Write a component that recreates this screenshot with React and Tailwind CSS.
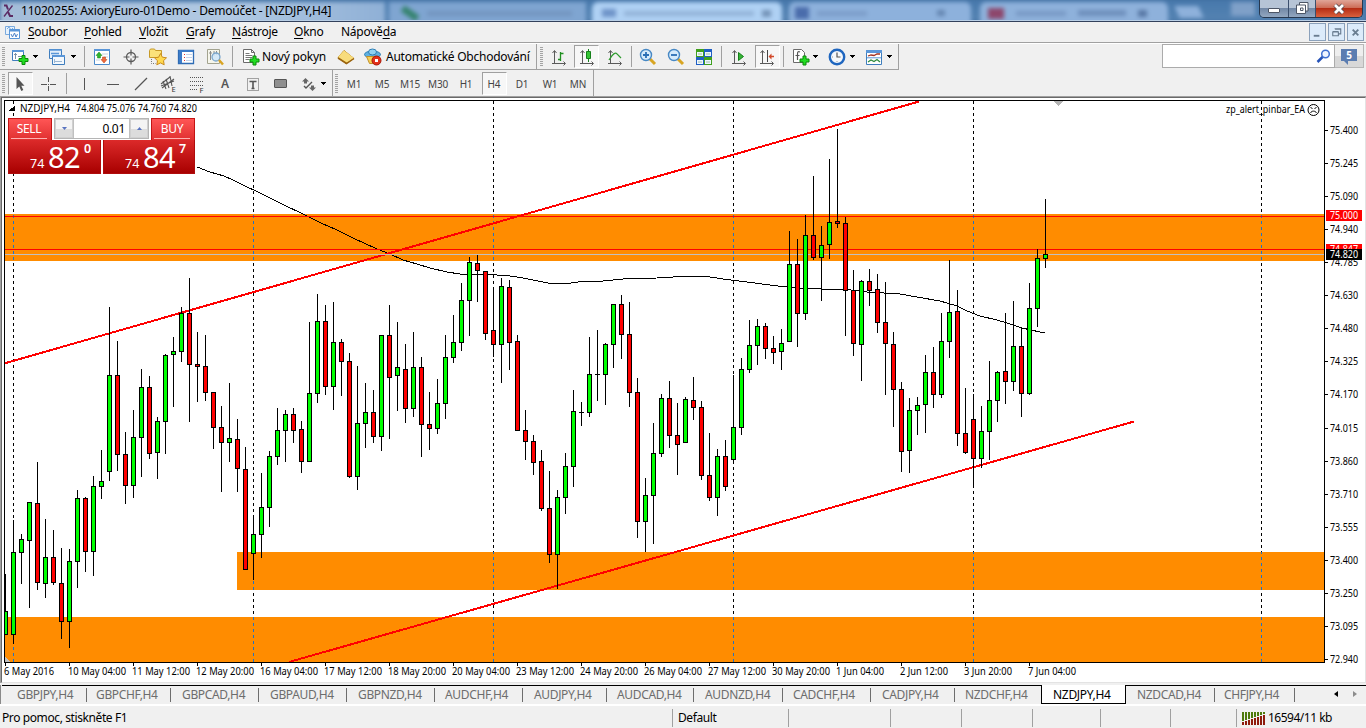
import React from "react";

// [high, bodyTop, bodyBottom, low, up] - one row per H4 bar, 8px apart
const candles = [
  [574, 611, 635, 635, 1], [520, 552, 635, 644, 1], [534, 539, 553, 584, 1], [502, 502, 541, 608, 1],
  [462, 503, 583, 590, 0], [519, 557, 584, 598, 1], [530, 557, 583, 585, 0], [548, 583, 622, 639, 0],
  [549, 561, 622, 648, 1], [490, 498, 562, 588, 1], [497, 498, 552, 572, 0], [476, 486, 552, 576, 1],
  [450, 481, 487, 499, 1], [307, 375, 472, 481, 1], [341, 375, 455, 471, 0], [432, 454, 486, 504, 0],
  [410, 437, 486, 498, 1], [369, 387, 438, 477, 1], [376, 387, 454, 459, 0], [417, 421, 453, 479, 1],
  [354, 355, 422, 454, 1], [337, 351, 355, 407, 1], [307, 313, 352, 362, 1], [278, 313, 365, 422, 0],
  [332, 364, 367, 402, 0], [335, 366, 393, 401, 0], [392, 392, 428, 449, 0], [406, 427, 443, 492, 0],
  [383, 438, 443, 462, 1], [419, 439, 469, 492, 0], [447, 469, 570, 570, 0], [518, 534, 554, 580, 1],
  [473, 507, 535, 558, 1], [451, 456, 508, 527, 1], [408, 430, 457, 465, 1], [410, 414, 431, 462, 1],
  [408, 414, 431, 443, 0], [421, 429, 462, 473, 0], [322, 393, 462, 462, 1], [294, 321, 394, 403, 1],
  [305, 321, 387, 395, 0], [302, 342, 387, 410, 1], [339, 342, 362, 396, 0], [353, 361, 477, 478, 0],
  [366, 423, 477, 490, 1], [383, 412, 424, 448, 1], [390, 412, 437, 443, 0], [335, 335, 437, 451, 1],
  [305, 335, 378, 439, 0], [322, 367, 376, 411, 1], [344, 369, 409, 423, 0], [332, 367, 409, 417, 1],
  [357, 367, 425, 457, 0], [392, 424, 429, 450, 0], [379, 403, 429, 434, 1], [335, 357, 404, 419, 1],
  [315, 342, 358, 363, 1], [283, 300, 343, 351, 1], [257, 262, 301, 336, 1], [255, 263, 271, 302, 0],
  [271, 271, 334, 340, 0], [290, 330, 345, 357, 0], [278, 286, 345, 383, 1], [280, 287, 343, 370, 0],
  [335, 341, 431, 431, 0], [410, 430, 442, 460, 0], [435, 441, 463, 475, 0], [450, 461, 509, 511, 0],
  [471, 508, 555, 563, 0], [490, 497, 555, 589, 1], [453, 466, 498, 514, 1], [390, 411, 467, 487, 1],
  [402, 412, 413, 426, 1], [337, 374, 413, 417, 1], [330, 374, 375, 401, 1], [343, 344, 375, 405, 1],
  [304, 304, 345, 368, 1], [295, 304, 335, 359, 0], [302, 334, 393, 407, 0], [378, 392, 522, 538, 0],
  [478, 495, 522, 552, 1], [423, 453, 496, 544, 1], [394, 398, 454, 457, 1], [381, 398, 436, 448, 0],
  [403, 435, 445, 475, 0], [397, 399, 443, 443, 1], [377, 400, 408, 420, 0], [401, 407, 476, 480, 0],
  [433, 475, 498, 501, 0], [449, 456, 498, 516, 1], [440, 456, 487, 491, 0], [375, 427, 460, 464, 1],
  [358, 369, 428, 435, 1], [320, 345, 370, 373, 1], [319, 326, 346, 365, 1], [323, 326, 349, 359, 0],
  [336, 348, 353, 364, 0], [329, 343, 352, 370, 1], [231, 264, 342, 342, 1], [239, 264, 314, 347, 0],
  [215, 235, 314, 320, 1], [176, 235, 258, 260, 0], [226, 245, 258, 301, 1], [159, 222, 245, 259, 1],
  [129, 221, 224, 228, 0], [217, 223, 291, 336, 0], [270, 290, 344, 356, 0], [280, 281, 345, 381, 1],
  [269, 281, 291, 306, 0], [274, 289, 323, 333, 0], [282, 322, 344, 395, 0], [332, 344, 390, 427, 0],
  [382, 389, 452, 472, 0], [398, 410, 451, 473, 1], [397, 405, 411, 435, 1], [355, 372, 405, 433, 1],
  [347, 372, 395, 408, 0], [313, 341, 395, 398, 1], [260, 312, 342, 358, 1], [290, 311, 434, 446, 0],
  [388, 433, 453, 454, 0], [394, 419, 459, 486, 0], [406, 431, 459, 468, 1], [361, 400, 432, 460, 1],
  [371, 372, 401, 422, 1], [313, 371, 382, 404, 0], [301, 346, 382, 391, 1], [327, 346, 394, 417, 0],
  [283, 308, 394, 395, 1], [249, 258, 309, 327, 1], [199, 254, 259, 268, 1],
];

const movingAverage =
  "197,167 210,172 224,176 233,180 243,185 260,193 282,204 305,215 321,223 337,230 353,238 377,249 390,254 403,260 417,264 430,268 447,272 460,274 483,274 497,275 510,276 523,278 548,283 565,284 578,282 603,281 623,279 657,278 690,276 710,277 723,279 747,282 770,285 795,288 822,289 843,289 867,292 900,294 917,297 940,301 957,306 967,311 980,316 997,320 1007,323 1022,328 1040,332 1045,333";

const prices = [
  ["75.400", 130], ["75.245", 163], ["75.090", 196], ["74.940", 229], ["74.785", 262], ["74.630", 295],
  ["74.480", 328], ["74.325", 361], ["74.170", 394], ["74.015", 428], ["73.860", 461], ["73.710", 494],
  ["73.555", 527], ["73.400", 560], ["73.250", 593], ["73.095", 626], ["72.940", 659],
];

const dates = [
  "6 May 2016", "10 May 04:00", "11 May 12:00", "12 May 20:00", "16 May 04:00", "17 May 12:00",
  "18 May 20:00", "20 May 04:00", "23 May 12:00", "24 May 20:00", "26 May 04:00", "27 May 12:00",
  "30 May 20:00", "1 Jun 04:00", "2 Jun 12:00", "3 Jun 20:00", "7 Jun 04:00",
];

const separators = [13, 253, 493, 733, 973, 1261];

const menu = [
  ["", "S", "oubor", "w-[56px]"],
  ["", "P", "ohled", "w-[55px]"],
  ["", "V", "ložit", "w-[47px]"],
  ["", "G", "rafy", "w-[46px]"],
  ["", "N", "ástroje", "w-[62px]"],
  ["", "O", "kno", "w-[47px]"],
  ["Nápově", "d", "a", "w-[60px]"],
];

const tabs = [
  ["GBPJPY,H4", "w-[85px] pl-[15px]"],
  ["GBPCHF,H4", "w-[84px] pl-[9px]"],
  ["GBPCAD,H4", "w-[88px] pl-[11px]"],
  ["GBPAUD,H4", "w-[88px] pl-[11px]"],
  ["GBPNZD,H4", "w-[88px] pl-[11px]"],
  ["AUDCHF,H4", "w-[88px] pl-[10px]"],
  ["AUDJPY,H4", "w-[84px] pl-[11px]"],
  ["AUDCAD,H4", "w-[87px] pl-[10px]"],
  ["AUDNZD,H4", "w-[89px] pl-[11px]"],
  ["CADCHF,H4", "w-[88px] pl-[10px]"],
  ["CADJPY,H4", "w-[84px] pl-[11px]"],
  ["NZDCHF,H4", "w-[86px] pl-[10px]"],
  ["NZDJPY,H4", "w-[85px] pl-[11px]"],
  ["NZDCAD,H4", "w-[89px] pl-[11px]"],
  ["CHFJPY,H4", "w-[80px] pl-[9px]"],
];

const timeframes = ["M1", "M5", "M15", "M30", "H1", "H4", "D1", "W1", "MN"];

function Slot({ w, children }) {
  return <div className={`flex h-full shrink-0 items-center justify-center ${w}`}>{children}</div>;
}

function Grip({ w }) {
  return (
    <Slot w={w}>
      <div className="h-[20px] w-[3px] bg-[repeating-linear-gradient(#a3a3a3_0_1px,#efefef_1px_2px)]" />
    </Slot>
  );
}

function Sep({ w }) {
  return (
    <Slot w={w}>
      <div className="h-[21px] w-px bg-[#a0a0a0]" />
    </Slot>
  );
}

function Drop({ w }) {
  return (
    <Slot w={w}>
      <svg width="5" height="3" className="shrink-0" shapeRendering="crispEdges">
        <path d="M0 0h5v1h-1v1h-1v1h-1v-1h-1v-1h-1z" fill="#000" />
      </svg>
    </Slot>
  );
}

function Icon({ children, size = 18 }) {
  return (
    <svg width={size} height={size} viewBox={`0 0 ${size} ${size}`} className="shrink-0">
      {children}
    </svg>
  );
}

function Pressed({ children }) {
  return (
    <div className="flex h-[23px] w-[25px] shrink-0 items-center justify-center border border-t-[#a0a0a0] border-r-white border-b-white border-l-[#a0a0a0] bg-[#f7f7f7]">
      {children}
    </div>
  );
}

function Plus({ x, y }) {
  return (
    <path
      transform={`translate(${x} ${y})`}
      d="M3.5 .5h3v3h3v3h-3v3h-3v-3h-3v-3h3z"
      fill="#22dd22"
      stroke="#0a8a0a"
    />
  );
}

// axes shared by the chart type buttons
function Axes() {
  return (
    <path d="M4.5 3v13M2 15.5h13M2.5 5l2-2.5 2 2.5M13.5 13.5l2 2-2 2" fill="none" stroke="#5a5a5a" />
  );
}

function TitleBar() {
  return (
    <div className="relative flex h-[22px] overflow-hidden border-b border-[#33415c] bg-[#416d9f]">
      <div className="absolute inset-0 flex bg-[linear-gradient(#4779ac,#5583b2)] pt-[2px] blur-[2px]">
        <div className="h-[22px] w-[385px] bg-[linear-gradient(90deg,#a3bcd8,#b1c9e3_60%,#8fb0d6)]" />
        <div className="ml-[4px] flex h-[22px] w-[197px] items-center gap-2 bg-[#7fa5d1] pl-[12px]">
          <span className="h-[7px] w-[18px] rotate-[35deg] bg-[#35836f]" />
          <span className="h-[5px] w-[145px] bg-[#7395c0]" />
        </div>
        <div className="ml-[6px] flex h-[22px] w-[190px] items-center gap-2 rounded-t-md bg-[#afd1f4] pl-[10px]">
          <span className="h-[8px] w-[14px] bg-[#6e93c8]" />
          <span className="h-[5px] w-[130px] bg-[#93b3d8]" />
          <span className="h-[7px] w-[9px] bg-[#7493b8]" />
        </div>
        <div className="ml-[7px] flex h-[22px] w-[182px] items-center gap-2 rounded-t-md bg-[#8db1dc] pl-[6px]">
          <span className="h-[12px] w-[14px] bg-[#4a6cab]" />
          <span className="h-[5px] w-[50px] bg-[#7c9dc9]" />
          <span className="ml-[62px] h-[6px] w-[8px] bg-[#6586b1]" />
        </div>
        <div className="ml-[9px] flex h-[22px] w-[188px] items-center gap-3 rounded-t-md bg-[#8eb1db] pl-[8px]">
          <span className="h-[11px] w-[16px] bg-[#8d476c]" />
          <span className="h-[5px] w-[50px] bg-[#7899c5]" />
          <span className="h-[6px] w-[48px] bg-[#6e8fbc]" />
          <span className="h-[7px] w-[9px] bg-[#5878a5]" />
        </div>
        <div className="mt-[4px] ml-[9px] h-[12px] w-[24px] skew-x-[25deg] bg-[#8eb1db]" />
        <div className="ml-[30px] h-[14px] w-[24px] bg-[#7fa0c8]" />
      </div>
      <div className="absolute inset-x-0 bottom-0 h-px bg-[#b9cfe6]" />
      <div className="relative flex flex-1 items-center">
        <svg width="14" height="14" viewBox="0 0 14 14" className="ml-[2px]">
          <path d="M2 1.500h2.500l1.500 4M6 8l2 4h3" fill="none" stroke="#5b2a63" strokeWidth="2" />
          <path d="M10.500 1.500L2 12.500" stroke="#5b2a63" strokeWidth="1.300" />
        </svg>
        <span className="ml-[5px] text-[12px] tracking-[-0.21px] whitespace-nowrap text-black">
          11020255: AxioryEuro-01Demo - Demoúčet - [NZDJPY,H4]
        </span>
      </div>
      <div className="relative mr-[3px] flex h-[18px] w-[104px] overflow-hidden rounded-b-[5px] border border-t-0 border-[#26374f]">
        <div className="flex w-[29px] items-end justify-center border-r border-[#3b4f6d] bg-[linear-gradient(#b6c4d6_45%,#7288a6_50%,#93a7c0)] pb-[4px]">
          <span className="h-[5px] w-[12px] rounded-[1px] border border-[#4d5666] bg-white" />
        </div>
        <div className="flex w-[27px] items-center justify-center border-r border-[#3b4f6d] bg-[linear-gradient(#b6c4d6_45%,#7288a6_50%,#93a7c0)]">
          <svg width="13" height="13" viewBox="0 0 13 13">
            <path d="M3.500 .500h8.500v8.500h-2.500v2.500H.500V3h3z" fill="#fff" stroke="#4d5666" />
            <path d="M3.500 3h6v6.500M4.500 6h2.500v2.500h-2.500z" fill="none" stroke="#4d5666" />
          </svg>
        </div>
        <div className="flex flex-1 items-center justify-center bg-[linear-gradient(#e0a598_0%,#cd6d58_45%,#b52d15_50%,#d9613d)]">
          <svg width="14" height="12" viewBox="0 0 14 12">
            <path d="M3 2l8 8M11 2l-8 8" stroke="#5a4a50" strokeWidth="4.500" />
            <path d="M3 2l8 8M11 2l-8 8" stroke="#fff" strokeWidth="2.800" />
          </svg>
        </div>
      </div>
    </div>
  );
}

function MenuBar() {
  return (
    <div className="flex h-[21px] items-center border-b border-[#a0a0a0] bg-[#f0f0f0]">
      <svg width="15" height="15" viewBox="0 0 15 15" className="mr-[8px] ml-[5px]">
        <path d="M.500 1.500h9v8h-9z" fill="#e8f2fc" stroke="#7aaade" />
        <path d="M2 4l2-2 2 3 2-2" fill="none" stroke="#7aaade" />
        <path d="M4.500 4.500h10v9h-10z" fill="#fff" stroke="#5a96d8" />
        <path d="M4 5.500h11" stroke="#5a96d8" strokeWidth="2" />
        <path d="M6 9l1.500 3 2-4 1.500 4 1.500-3" fill="none" stroke="#4c82c8" />
      </svg>
      {menu.map(([pre, key, post, w]) => (
        <div key={post} className={`shrink-0 text-[12px] tracking-[-0.25px] text-black ${w}`}>
          {pre}
          <span className="underline underline-offset-2">{key}</span>
          {post}
        </div>
      ))}
      <div className="mr-[2px] ml-auto flex gap-[2px]">
        {["M4 11.500h6", "M6.500 4.500h6v5h-2M4 7.500h6v4H4zM4 7h6M6 4h7", "M5 5l6 6M11 5l-6 6"].map((d, i) => (
          <div key={d} className="flex h-[18px] w-[17px] items-center justify-center border border-[#8ba1bb] bg-[#dcebfa]">
            <svg width="15" height="15" viewBox="0 0 16 16">
              <path d={d} fill="none" stroke="#6a7d90" strokeWidth={i === 1 ? 1.2 : 2} />
            </svg>
          </div>
        ))}
      </div>
    </div>
  );
}

function Toolbar() {
  return (
    <div className="flex h-[27px] border-t border-white bg-[#f0f0f0]">
      <div className="flex h-[26px] w-[899px] border-r border-b border-[#a0a0a0]">
        <Grip w="w-[7px]" />
        <Slot w="w-[25px]">
          <Icon>
            <path d="M1.500 2.500h11v10h-11z" fill="#fff" stroke="#3f7dbd" />
            <path d="M1 3h12" stroke="#5a96d8" strokeWidth="2" />
            <path d="M4.500 5v6M3 6.500h3M7 8.500h4" stroke="#7b90a8" />
            <Plus x={7.500} y={7} />
          </Icon>
        </Slot>
        <Drop w="w-[7px]" />
        <Slot w="ml-[4px] w-[27px]">
          <Icon>
            <path d="M1.500 1.500h12v9h-12z" fill="#e4effa" stroke="#3f7dbd" />
            <path d="M1 2h13M3 5.500h8" stroke="#5a96d8" strokeWidth="1.500" />
            <path d="M4.500 7.500h12v9h-12z" fill="#f3f8fd" stroke="#3f7dbd" />
            <path d="M4 8h13" stroke="#5a96d8" strokeWidth="2" />
            <path d="M7 13.500h7M6.500 11v4" stroke="#9db8d4" />
          </Icon>
        </Slot>
        <Drop w="w-[6px]" />
        <Sep w="w-[16px]" />
        <Slot w="w-[20px]">
          <Icon>
            <path d="M1.500 1.500h15v15h-15z" fill="#fff" stroke="#4c8acb" />
            <path d="M1 2h16" stroke="#5a96d8" strokeWidth="2" />
            <path d="M9 6h6M11 9h4M3 12h4" stroke="#c4d3e2" />
            <path d="M6 4l3 3.500H7.500V10h-3V7.500H3z" fill="#2db52d" stroke="#16801a" strokeWidth=".5" />
            <path d="M11 15L8 11.500h1.500V9h3v2.500H14z" fill="#ee6a3c" stroke="#b63a14" strokeWidth=".5" />
          </Icon>
        </Slot>
        <Slot w="w-[37px]">
          <Icon>
            <circle cx="9" cy="9" r="4.500" fill="none" stroke="#5b5b5b" strokeWidth="1.300" />
            <path d="M9 1.500v6M9 10.500v6M1.500 9h6M10.500 9h6" stroke="#5b5b5b" strokeWidth="1.200" />
          </Icon>
        </Slot>
        <Slot w="w-[18px]">
          <Icon>
            <path d="M.500 2.500l1-1.500h4l1 1.500h6v7H.500z" fill="#fbe27a" stroke="#c79a28" />
            <path d="M2.500 11v4.500h4" fill="none" stroke="#777" strokeDasharray="1 1" />
            <path d="M11.500 5.500l1.900 3.700 4.100.6-3 2.900.7 4.100-3.700-1.900-3.700 1.900.7-4.100-3-2.900 4.100-.6z" fill="#ffd94f" stroke="#c98c1e" />
          </Icon>
        </Slot>
        <Slot w="w-[38px]">
          <Icon>
            <path d="M1.500 2.500h15v13h-15z" fill="#fff" stroke="#2f6cb5" strokeWidth="1.300" />
            <path d="M2 3h14" stroke="#3c7cc8" strokeWidth="2" />
            <path d="M3.500 4v11" stroke="#3c7cc8" strokeWidth="3" />
            <path d="M7 6.500h1M7 9.500h1M7 12.500h1" stroke="#d33" />
            <path d="M9 6.500h6M9 9.500h6M9 12.500h6" stroke="#c3d4ea" />
          </Icon>
        </Slot>
        <Slot w="w-[19px]">
          <Icon>
            <path d="M1.500 1.500h12v14h-12z" fill="#f6f6ec" stroke="#a3a38f" />
            <path d="M4.500 3v9M3 5h3M8 3v5M10.500 3v4" stroke="#8c8c8c" />
            <circle cx="10" cy="9" r="4" fill="#cfe6fa" fillOpacity=".85" stroke="#7aa5cc" strokeWidth="1.300" />
            <path d="M13 12l4 4.500" stroke="#d9a423" strokeWidth="2.500" />
          </Icon>
        </Slot>
        <Sep w="w-[16px]" />
        <Slot w="w-[21px]">
          <Icon>
            <path d="M1.500 1.500h8l3 3v10h-11z" fill="#fff" stroke="#6b6b6b" />
            <path d="M9.500 1.500v3h3" fill="none" stroke="#6b6b6b" />
            <path d="M3.500 5.500h4M3.500 7.500h7M3.500 9.500h7M3.500 11.500h4" stroke="#777" />
            <Plus x={7.500} y={7.500} />
          </Icon>
        </Slot>
        <div className="w-[67px] self-center pl-px text-[12px] tracking-[-0.2px] whitespace-nowrap text-black">Nový pokyn</div>
        <Slot w="w-[36px]">
          <Icon>
            <path d="M7 2.500L1 9.500l8 6 8-5z" fill="#f3c64a" stroke="#b07a17" />
            <path d="M7 2.500l10 7.500-7 4.500L1 9z" fill="#f8dc7c" />
            <path d="M1 10l8.500 5.500 7.500-5" fill="none" stroke="#9a6410" strokeWidth="1.500" />
          </Icon>
        </Slot>
        <Slot w="w-[18px]">
          <Icon>
            <ellipse cx="8.500" cy="6.500" rx="8" ry="3.500" fill="#5fb0e0" stroke="#2f7fb5" />
            <ellipse cx="8.500" cy="4" rx="4" ry="3" fill="#8fd0f2" stroke="#2f7fb5" />
            <path d="M2.500 8.500h11l-2 7h-6z" fill="#f6cf55" stroke="#c0902a" />
            <circle cx="12.500" cy="12.500" r="4.500" fill="#e2301a" stroke="#a81505" />
            <path d="M11 11h3v3h-3z" fill="#fff" />
          </Icon>
        </Slot>
        <div className="w-[154px] self-center pl-[4px] text-[12px] tracking-[-0.24px] whitespace-nowrap text-black">Automatické Obchodování</div>
        <div className="w-px bg-[#a0a0a0]" />
        <Grip w="w-[9px]" />
        <Slot w="w-[26px]">
          <Icon>
            <Axes />
            <path d="M10.500 4v9M10.500 5.500h3M8 11.500h3" stroke="#1f8f1f" strokeWidth="1.300" />
          </Icon>
        </Slot>
        <Slot w="w-[29px]">
          <Pressed>
            <Icon>
              <Axes />
              <path d="M10.500 1v13" stroke="#15801a" />
              <path d="M8.500 3.500h4v7h-4z" fill="#35c435" stroke="#15801a" />
            </Icon>
          </Pressed>
        </Slot>
        <Slot w="w-[28px]">
          <Icon>
            <Axes />
            <path d="M3 12c4-7 7-8 8-6l4 4" fill="none" stroke="#2d9a2d" strokeWidth="1.200" />
          </Icon>
        </Slot>
        <Sep w="w-[4px]" />
        <Slot w="w-[30px]">
          <Icon>
            <path d="M11 11l5 5" stroke="#d8a522" strokeWidth="3" />
            <circle cx="7" cy="7" r="5.500" fill="#d6ebfb" stroke="#4788c4" strokeWidth="1.400" />
            <path d="M4 7h6M7 4v6" stroke="#2b6fb5" strokeWidth="1.800" />
          </Icon>
        </Slot>
        <Slot w="w-[26px]">
          <Icon>
            <path d="M11 11l5 5" stroke="#d8a522" strokeWidth="3" />
            <circle cx="7" cy="7" r="5.500" fill="#d6ebfb" stroke="#4788c4" strokeWidth="1.400" />
            <path d="M4 7h6" stroke="#2b6fb5" strokeWidth="1.800" />
          </Icon>
        </Slot>
        <Slot w="w-[30px]">
          <Icon>
            <path d="M1 1h8v8H1zM9 9h8v8H9z" fill="#3fa01c" />
            <path d="M9 1h8v8H9zM1 9h8v8H1z" fill="#1f5fc4" />
            <path d="M2 4h6v4H2zM10 4h6v4h-6zM2 12h6v4H2zM10 12h6v4h-6z" fill="#eef5ff" />
            <path d="M3 6h4M11 6h4M3 14h4M11 14h4" stroke="#9fc0a0" />
          </Icon>
        </Slot>
        <Sep w="w-[4px]" />
        <Slot w="w-[32px]">
          <Icon>
            <Axes />
            <path d="M8.500 4.500l5 4-5 4z" fill="#35b435" stroke="#15801a" />
          </Icon>
        </Slot>
        <Slot w="w-[24px]">
          <Pressed>
            <Icon>
              <Axes />
              <path d="M9.500 2v12" stroke="#444" />
              <path d="M10.500 8.500l3-3v2.300h2.500v1.400h-2.500v2.300z" fill="#d2492a" />
            </Icon>
          </Pressed>
        </Slot>
        <Sep w="w-[8px]" />
        <Slot w="w-[27px]">
          <Icon>
            <path d="M1.500 1.500h8l3 3v10h-11z" fill="#fff" stroke="#6b6b6b" />
            <path d="M8 4c-2-1-2.500 0-2.500 2v6M3.500 7.500h4" fill="none" stroke="#555" strokeWidth="1.200" />
            <Plus x={7.500} y={7.500} />
          </Icon>
        </Slot>
        <Drop w="w-[3px]" />
        <Slot w="ml-[8px] w-[24px]">
          <Icon>
            <circle cx="9" cy="9" r="7.200" fill="#f4f8fc" stroke="#1f66bf" strokeWidth="2.400" />
            <path d="M9 4.500V9h3.500" fill="none" stroke="#555" strokeWidth="1.200" />
            <path d="M4 9h1M9 13v1" stroke="#999" />
          </Icon>
        </Slot>
        <Drop w="w-[6px]" />
        <Slot w="ml-[7px] w-[23px]">
          <Icon>
            <path d="M1.500 2.500h15v14h-15z" fill="#fff" stroke="#3f7dbd" />
            <path d="M1 3.500h16" stroke="#5a96d8" strokeWidth="3" />
            <path d="M2 9.800h14" stroke="#5a96d8" />
            <path d="M3 8l3-1 3 .5 3-1.500h3" fill="none" stroke="#a03020" strokeWidth="1.300" />
            <path d="M3 14l3-2 3 1.500 3-2 3 2.500" fill="none" stroke="#2c8a3a" strokeWidth="1.200" />
          </Icon>
        </Slot>
        <Drop w="w-[8px]" />
      </div>
      <div className="mr-[2px] ml-auto flex h-[24px]">
        <div className="flex w-[173px] items-center justify-end border border-[#ababab] bg-white pr-[3px]">
          <svg width="15" height="15" viewBox="0 0 15 15">
            <circle cx="9.500" cy="5" r="3.800" fill="#eef4ff" stroke="#3f6fd0" strokeWidth="1.500" />
            <path d="M6.500 8L1.500 13" stroke="#2552b8" strokeWidth="2.500" />
          </svg>
        </div>
        <div className="flex w-[29px] items-start justify-center border border-l-0 border-[#b8b8b8] bg-[linear-gradient(#eeeeee_50%,#d8d8d8_50%)] pt-[4px]">
          <div className="relative flex h-[12px] w-[16px] items-center justify-center bg-[#5b7db1] text-[10px] font-bold text-white">
            5
            <span className="absolute top-[12px] left-[3px] border-t-4 border-l-4 border-t-[#5b7db1] border-l-transparent" />
          </div>
        </div>
      </div>
    </div>
  );
}

function DrawingBar() {
  return (
    <div className="flex h-[26px] bg-[#f0f0f0]">
      <div className="flex h-full w-[333px] border-r border-[#a0a0a0] pt-px">
        <Grip w="w-[7px]" />
        <Slot w="w-[27px]">
          <Pressed>
            <Icon>
              <path d="M4.500 2v12l2.800-2.500 2 4.500 2-1-2-4.300h3.200z" fill="#555" />
            </Icon>
          </Pressed>
        </Slot>
        <Slot w="w-[29px]">
          <Icon>
            <path d="M8.500 2v5M8.500 11v5M1 9.500h6M10 9.500h6M8 9.500h1" stroke="#555" />
          </Icon>
        </Slot>
        <Sep w="w-[6px]" />
        <Slot w="w-[31px]">
          <Icon>
            <path d="M8.500 3v12" stroke="#555" />
          </Icon>
        </Slot>
        <Slot w="w-[26px]">
          <Icon>
            <path d="M3 9.500h12" stroke="#555" />
          </Icon>
        </Slot>
        <Slot w="w-[30px]">
          <Icon>
            <path d="M3 15L15 3" stroke="#555" strokeWidth="1.200" />
          </Icon>
        </Slot>
        <Slot w="w-[25px]">
          <Icon>
            <path d="M1 9l9-7M2 13L14 4M3 6l3 8M6 4l3 9M10 1l2 10M1 11l13-5" stroke="#555" strokeWidth="1.100" />
            <text x="11.500" y="17" fontSize="7.500" fill="#333">E</text>
          </Icon>
        </Slot>
        <Slot w="w-[32px]">
          <Icon>
            <path d="M2 2.500h14M2 6.500h14M2 10.500h14M2 14.500h8" stroke="#555" strokeDasharray="1 1" />
            <text x="11.500" y="17.500" fontSize="7.500" fill="#333">F</text>
          </Icon>
        </Slot>
        <Slot w="w-[24px]">
          <span className="text-[12px] font-semibold text-[#555]">A</span>
        </Slot>
        <Slot w="w-[31px]">
          <Icon>
            <path d="M3.500 3.500h11v12h-11z" fill="none" stroke="#555" strokeDasharray="1 1" />
            <path d="M5.500 6.500h7M9 6.500v7M7.500 13.500h3" stroke="#555" strokeWidth="1.600" />
          </Icon>
        </Slot>
        <Slot w="w-[25px]">
          <div className="h-[9px] w-[13px] rounded-[1px] border border-[#555] bg-[#8f8f8f]" />
        </Slot>
        <Slot w="ml-[3px] w-[26px]">
          <Icon>
            <path d="M5.500 3l3.500 3.500H7v2H4v-2H2zM12.500 16L9 12.500h2v-2h3v2h2z" fill="#666" />
            <path d="M4 11l2 2 6-6" fill="none" stroke="#555" strokeWidth="1.400" />
          </Icon>
        </Slot>
        <Drop w="w-[3px]" />
      </div>
      <div className="flex h-full w-[261px] border-r border-[#a0a0a0] pt-px">
        <Grip w="w-[7px]" />
        {timeframes.map((tf) => (
          <Slot key={tf} w="w-[28px]">
            {tf === "H4" ? (
              <Pressed>
                <span className="text-[10px] tracking-[-0.1px] text-[#444]">{tf}</span>
              </Pressed>
            ) : (
              <span className="text-[10px] tracking-[-0.2px] text-[#444]">{tf}</span>
            )}
          </Slot>
        ))}
      </div>
    </div>
  );
}

function SpinButton({ up }) {
  return (
    <div className="flex w-[18px] items-center justify-center border border-[#d0d0d0] bg-[linear-gradient(#f4f4f4_50%,#dcdcdc_50%)]">
      <svg width="5" height="3" viewBox="0 0 5 3">
        <path d={up ? "M0 3L2.500 0 5 3z" : "M0 0h5L2.500 3z"} fill="#5873c0" />
      </svg>
    </div>
  );
}

function PriceBox({ big, small }) {
  return (
    <div className="flex h-[34px] items-start border border-t-0 border-[#b00c0c] bg-[linear-gradient(#dc2a2a,#a80000)] text-white">
      <span className="mt-[15px] ml-[21px] w-[17px] text-[12.5px] leading-[17px]">74</span>
      <span className="mt-[-1px] w-[37px] pl-[1px] text-[29px] leading-[36px] tracking-[-0.6px]">{big}</span>
      <span className="mt-[1px] text-[12.5px] leading-[15px] font-semibold">{small}</span>
    </div>
  );
}

function OneClick() {
  return (
    <div className="absolute top-[20px] left-[6px] w-[187px]">
      <div className="flex h-[22px] justify-between">
        <div className="flex w-[44px] flex-col items-center border border-b-0 border-[#c41414] bg-[linear-gradient(#ff5555,#e03030)] pr-[2px] text-[12px] leading-[19px] tracking-[-0.3px] text-white">
          SELL
          <span className="h-px w-[36px] shrink-0 bg-[#ffb0b0]" />
        </div>
        <div className="flex h-[21px] w-[95px] border border-[#b5b5b5] bg-white">
          <SpinButton />
          <span className="flex-1 border-x border-[#c0c0c0] pr-[4px] text-right text-[12px] leading-[19px] tracking-[-0.3px] text-black">0.01</span>
          <SpinButton up />
        </div>
        <div className="flex w-[44px] flex-col items-center border border-b-0 border-[#c41414] bg-[linear-gradient(#ff5555,#e03030)] pr-[2px] text-[12px] leading-[19px] tracking-[-0.3px] text-white">
          BUY
          <span className="h-px w-[36px] shrink-0 bg-[#ffb0b0]" />
        </div>
      </div>
      <div className="grid grid-cols-[93px_92px] gap-[2px]">
        <PriceBox big="82" small="0" />
        <PriceBox big="84" small="7" />
      </div>
    </div>
  );
}

function Chart() {
  return (
    <div className="relative h-[587px] border-t border-l border-[#a0a0a0] bg-white">
      <div className="h-full border-t border-r border-b border-l border-t-[#696969] border-r-[#e3e3e3] border-b-[#e3e3e3] border-l-[#696969]">
        <svg width="1362" height="585" viewBox="2 98 1362 585" className="block">
          <defs>
            <clipPath id="zones">
              <rect x="5" y="214" width="1319" height="47" />
              <rect x="237" y="552" width="1087" height="38" />
              <rect x="5" y="617" width="1319" height="45" />
            </clipPath>
            <clipPath id="plot">
              <rect x="5" y="101" width="1319" height="561" />
            </clipPath>
          </defs>

          <g shapeRendering="crispEdges">
            {/* zones */}
            <g fill="#ff8c00">
              <rect x="5" y="214" width="1319" height="47" />
              <rect x="237" y="552" width="1087" height="38" />
              <rect x="5" y="617" width="1319" height="45" />
            </g>

            {/* day separators */}
            <g stroke="#000" strokeDasharray="3 3">
              {separators.map((x) => (
                <path key={x} d={`M${x + 0.5} 101V662`} />
              ))}
            </g>
            <g clipPath="url(#zones)">
              {separators.map((x) => (
                <g key={x}>
                  <path d={`M${x + 0.5} 101V662`} stroke="#ff8c00" />
                  <path d={`M${x + 0.5} 101V662`} stroke="#1e73c8" strokeDasharray="3 3" />
                </g>
              ))}
            </g>

            <g clipPath="url(#plot)" fill="none">
              <polyline points={movingAverage} stroke="#000" />
              <path d="M4 363.500L919 101.500M289 662L1134 421.500" stroke="#f00" strokeWidth="2" />
            </g>
            <rect x="5" y="216" width="1319" height="1" fill="#f00" />
            <rect x="5" y="249" width="1319" height="1" fill="#f00" />
            <rect x="5" y="254" width="1319" height="1" fill="#c0c0c0" />

            {/* candles */}
            <g clipPath="url(#plot)">
              {candles.map(([high, top, bottom, low, up], i) => {
                const x = 5 + i * 8;
                return (
                  <g key={i}>
                    <rect x={x} y={high} width="1" height={low - high} />
                    <rect x={x - 2} y={top} width="5" height={bottom - top} />
                    {bottom - top > 2 && (
                      <rect x={x - 1} y={top + 1} width="3" height={bottom - top - 2} fill={up ? "#0f0" : "#f00"} />
                    )}
                  </g>
                );
              })}
            </g>

            {/* frame and ticks */}
            <path d="M4.500 662.500V100.500H1324.500V662.500Z" fill="none" stroke="#000" />
            {prices.map(([p, y]) => (
              <rect key={p} x="1325" y={y} width="3" height="1" />
            ))}
            {dates.map((d, i) => (
              <rect key={d} x={5 + i * 64} y="663" width="1" height="3" />
            ))}
            <path d="M1054 101h9l-4.500 5z" fill="#b4b4b4" />
            <path d="M5 657v5h5z" fill="#c0c0c0" />
            <path d="M8 111h7v-5z" />
          </g>

          <g fontSize="10" fill="#000">
            <text x="20" y="112" textLength="50" lengthAdjust="spacingAndGlyphs">NZDJPY,H4</text>
            <text x="76" y="112" textLength="121" lengthAdjust="spacingAndGlyphs">74.804 75.076 74.760 74.820</text>
            <text x="1226" y="113" textLength="79" lengthAdjust="spacingAndGlyphs">zp_alert_pinbar_EA</text>
            {prices.map(([p, y]) => (
              <text key={p} x="1330" y={y + 4} textLength="28" lengthAdjust="spacingAndGlyphs">{p}</text>
            ))}
            {dates.map((d, i) => (
              <text key={d} x={4 + i * 64} y="675" textLength={i === 0 ? 50 : i > 12 ? 48 : 58} lengthAdjust="spacingAndGlyphs">{d}</text>
            ))}
            <rect x="1326" y="210" width="36" height="11" fill="#f00" />
            <text x="1330" y="219" fill="#fff" textLength="28" lengthAdjust="spacingAndGlyphs">75.000</text>
            <rect x="1326" y="244" width="36" height="11" fill="#f00" />
            <text x="1330" y="253" fill="#fff" textLength="28" lengthAdjust="spacingAndGlyphs">74.847</text>
            <rect x="1326" y="249" width="36" height="11" fill="#000" />
            <text x="1330" y="258" fill="#fff" textLength="28" lengthAdjust="spacingAndGlyphs">74.820</text>
          </g>

          {/* EA status face */}
          <circle cx="1313.500" cy="110" r="5.500" fill="#fff" stroke="#000" />
          <path d="M1310.500 107.500l2 1M1316.500 107.500l-2 1M1310.500 113c1-2.500 5-2.500 6 0" fill="none" stroke="#000" />
        </svg>
      </div>
      <div className="absolute top-px left-px">
        <OneClick />
      </div>
    </div>
  );
}

function ChartTabs() {
  return (
    <div className="flex h-[23px] border-b-2 border-white bg-[#f0f0f0] pt-[2px]">
      <div className="mr-px w-px bg-[#8a8a8a]" />
      {tabs.map(([name, cls]) =>
        name === "NZDJPY,H4" ? (
          <div key={name} className={`h-[19px] border-x border-b border-black bg-white text-[12px] leading-[19px] tracking-[-0.3px] whitespace-nowrap text-black ${cls}`}>
            {name}
          </div>
        ) : (
          <div key={name} className={`relative h-[19px] border-t border-black text-[12px] leading-[17px] tracking-[-0.35px] whitespace-nowrap text-[#6d6d6d] ${cls}`}>
            {name}
            {name !== "NZDCHF,H4" && <span className="absolute top-[2px] right-0 h-[14px] w-px bg-[#6d6d6d]" />}
          </div>
        )
      )}
      <div className="flex h-[19px] flex-1 items-center justify-end gap-[15px] border-t border-black pr-[9px] pb-[2px]">
        <svg width="4" height="6">
          <path d="M4 0v6L0 3z" fill="#000" />
        </svg>
        <svg width="4" height="6">
          <path d="M0 0v6l4-3z" fill="#8c8c8c" />
        </svg>
      </div>
    </div>
  );
}

function StatusBar() {
  return (
    <div className="flex h-[22px] items-center bg-[#f0f0f0] pt-[2px] text-[12px] tracking-[-0.4px] text-black">
      <div className="w-[672px] pl-[2px]">Pro pomoc, stiskněte F1</div>
      <div className="flex h-[18px] w-[116px] items-center border-l border-[#a0a0a0] pl-[5px]">Default</div>
      <div className="h-[18px] w-[102px] border-l border-[#a0a0a0]" />
      <div className="h-[18px] w-[71px] border-l border-[#a0a0a0]" />
      <div className="h-[18px] w-[71px] border-l border-[#a0a0a0]" />
      <div className="h-[18px] w-[68px] border-l border-[#a0a0a0]" />
      <div className="h-[18px] w-[70px] border-l border-[#a0a0a0]" />
      <div className="h-[18px] w-[66px] border-l border-[#a0a0a0]" />
      <div className="flex h-[18px] flex-1 items-center border-l border-[#a0a0a0] pl-[5px] tracking-[-0.5px]">
        <svg width="24" height="13" shapeRendering="crispEdges" className="mr-[2px]">
          {[0, 1, 2, 3, 4, 5, 6, 7].map((n) => (
            <g key={n}>
              <rect x={n * 3} y="0" width="2" height={9 - n} fill="#4e7a0c" />
              <rect x={n * 3} y={10 - n} width="2" height={3 + n} fill="#8e1b0c" />
            </g>
          ))}
        </svg>
        16594/11 kb
      </div>
    </div>
  );
}

export default function App() {
  return (
    <div className="flex h-[728px] w-[1366px] flex-col overflow-hidden bg-[#f0f0f0] font-['Noto_Sans','Open_Sans',sans-serif] leading-none">
      <TitleBar />
      <MenuBar />
      <Toolbar />
      <DrawingBar />
      <Chart />
      <ChartTabs />
      <StatusBar />
    </div>
  );
}
